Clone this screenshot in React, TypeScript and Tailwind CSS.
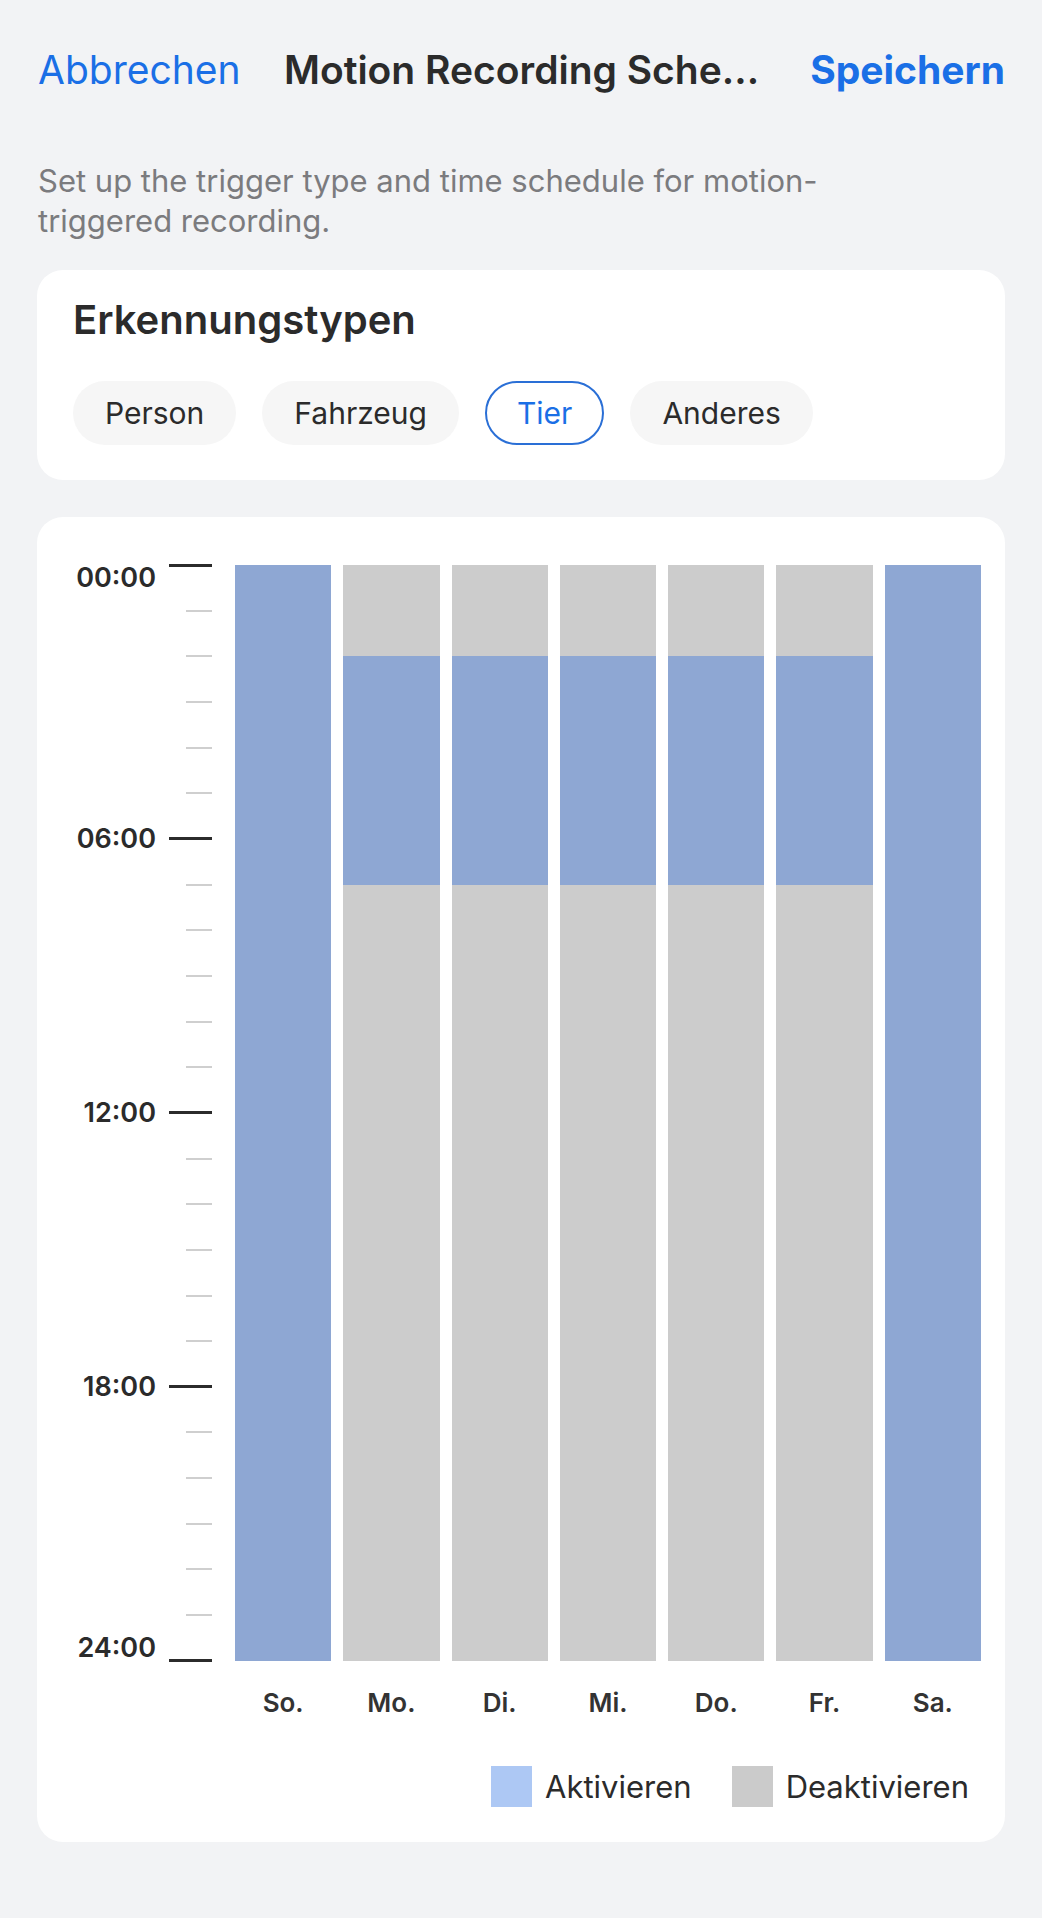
const days = [
  { label: 'So.', active: [0, 24] },
  { label: 'Mo.', active: [2, 7] },
  { label: 'Di.', active: [2, 7] },
  { label: 'Mi.', active: [2, 7] },
  { label: 'Do.', active: [2, 7] },
  { label: 'Fr.', active: [2, 7] },
  { label: 'Sa.', active: [0, 24] },
];

const types = ['Person', 'Fahrzeug', 'Tier', 'Anderes'];

// 25 ticks, one per hour; labels every 6h
const ticks = Array.from({ length: 25 }, (_, i) => i);

function DayBar({ active }: { active: number[] }) {
  const [from, to] = active;
  return (
    <div className="flex flex-col h-full">
      {from > 0 && <div className="bg-[#cccccc]" style={{ height: `${(from / 24) * 100}%` }} />}
      <div className="bg-[#8ea7d3]" style={{ height: `${((to - from) / 24) * 100}%` }} />
      {to < 24 && <div className="bg-[#cccccc] flex-1" />}
    </div>
  );
}

export default function App() {
  return (
    <div className="min-h-screen bg-[#f2f3f5] font-['Inter',sans-serif] pb-[78px]">
      {/* Nav bar */}
      <div className="grid grid-cols-[1fr_auto_1fr] items-center pt-[44px] pl-[38px] pr-[37px] leading-[52px]">
        <span className="text-[39px] text-[#1a6fe6] justify-self-start">Abbrechen</span>
        <span className="text-[39px] font-semibold text-[#2b2b2b]">Motion Recording Sche...</span>
        <span className="text-[39px] font-bold text-[#1a6fe6] justify-self-end">Speichern</span>
      </div>

      {/* Description */}
      <p className="mt-[65px] px-[38px] text-[31px] leading-[40px] text-[#7b7b7e] max-w-[880px]">
        Set up the trigger type and time schedule for motion-triggered recording.
      </p>

      {/* Detection types */}
      <div className="mx-[37px] mt-[29px] bg-white rounded-[26px] pt-[26px] pb-[35px] px-[36px]">
        <h2 className="text-[40px] leading-[48px] font-semibold text-[#2b2b2b]">Erkennungstypen</h2>
        <div className="flex gap-[26px] mt-[37px]">
          {types.map((t) =>
            t === 'Tier' ? (
              <span
                key={t}
                className="h-[64px] px-[30px] flex items-center rounded-full border-[2px] border-[#2a6fd6] text-[#1a6fe6] text-[30px] bg-white"
              >
                {t}
              </span>
            ) : (
              <span
                key={t}
                className="h-[64px] px-[32px] flex items-center rounded-full bg-[#f6f6f6] text-[#2b2b2b] text-[30px]"
              >
                {t}
              </span>
            )
          )}
        </div>
      </div>

      {/* Schedule chart */}
      <div className="mx-[37px] mt-[37px] bg-white rounded-[26px] pt-[47px] pb-[35px] pl-[24px] pr-[24px]">
        <div className="flex gap-[23px]">
          {/* Axis */}
          <div className="w-[151px] h-[1098px] flex flex-col justify-between">
            {ticks.map((h) => {
              const major = h % 6 === 0;
              const align = h === 0 ? 'items-start' : h === 24 ? 'items-end' : 'items-center';
              return (
                <div key={h} className={`flex justify-end h-[2px] gap-[13px] ${align}`}>
                  {major && (
                    <span className="text-[27px] leading-[28px] font-semibold text-[#2b2b2b] whitespace-nowrap">
                      {String(h).padStart(2, '0')}:00
                    </span>
                  )}
                  <span
                    className={
                      major
                        ? 'block w-[43px] h-[3px] bg-[#2b2b2b] shrink-0'
                        : 'block w-[26px] h-[2px] bg-[#cfcfcf] shrink-0'
                    }
                  />
                </div>
              );
            })}
          </div>

          {/* Bars */}
          <div className="flex-1 grid grid-cols-7 gap-[12px] h-[1096px] mt-[1px]">
            {days.map((d) => (
              <DayBar key={d.label} active={d.active} />
            ))}
          </div>
        </div>

        {/* Day labels */}
        <div className="flex gap-[23px] mt-[25px]">
          <div className="w-[151px]" />
          <div className="flex-1 grid grid-cols-7 gap-[12px]">
            {days.map((d) => (
              <span key={d.label} className="text-center text-[26px] leading-[32px] font-semibold text-[#333333]">
                {d.label}
              </span>
            ))}
          </div>
        </div>

        {/* Legend */}
        <div className="flex justify-end items-center gap-[40px] mt-[47px] pr-[12px]">
          <div className="flex items-center gap-[13px]">
            <span className="w-[41px] h-[41px] bg-[#adc8f4]" />
            <span className="text-[31px] leading-[38px] text-[#2b2b2b]">Aktivieren</span>
          </div>
          <div className="flex items-center gap-[13px]">
            <span className="w-[41px] h-[41px] bg-[#cbcbcb]" />
            <span className="text-[31px] leading-[38px] text-[#2b2b2b]">Deaktivieren</span>
          </div>
        </div>
      </div>
    </div>
  );
}
